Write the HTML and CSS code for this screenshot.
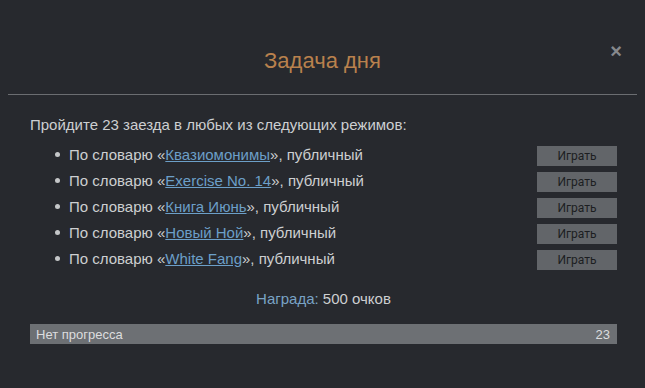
FILE: index.html
```html
<!DOCTYPE html>
<html lang="ru">
<head>
  <meta charset="UTF-8" />
  <meta name="viewport" content="width=device-width, initial-scale=1.0" />
  <title>Задача дня</title>
  <link rel="stylesheet" href="styles.css">
</head>
<body>
  <div class="modal">
    <header class="modal-header">
      <h2>Задача дня</h2>
      <span class="close">&times;</span>
    </header>

    <div class="modal-body">
      <p class="intro">Пройдите 23 заезда в любых из следующих режимов:</p>
      <ul class="modes">
        <li><span class="mode-text">По словарю «<a href="#">Квазиомонимы</a>», публичный</span><button>Играть</button></li>
        <li><span class="mode-text">По словарю «<a href="#">Exercise No. 14</a>», публичный</span><button>Играть</button></li>
        <li><span class="mode-text">По словарю «<a href="#">Книга Июнь</a>», публичный</span><button>Играть</button></li>
        <li><span class="mode-text">По словарю «<a href="#">Новый Ной</a>», публичный</span><button>Играть</button></li>
        <li><span class="mode-text">По словарю «<a href="#">White Fang</a>», публичный</span><button>Играть</button></li>
      </ul>
      <p class="reward"><span class="reward-label">Награда:</span> 500 очков</p>
      <div class="progress">
        <span>Нет прогресса</span>
        <span>23</span>
      </div>
    </div>
  </div>
</body>
</html>
```

FILE: styles.css
```css
body {
  font-family: 'Liberation Sans', Arial, sans-serif;
  margin: 0;
  padding: 0;
  background: #27292e;
  color: #cdcfd1;
}

.modal {
  margin: 0 8px;
}

.modal-header {
  position: relative;
  padding: 48px 0 20px;
  border-bottom: 1px solid #6b6d71;
  text-align: center;
}

.modal-header h2 {
  margin: 0;
  font-size: 22px;
  line-height: 26px;
  font-weight: normal;
  color: #b9814d;
}

.close {
  position: absolute;
  right: 15px;
  top: 41px;
  font-size: 20px;
  font-weight: bold;
  line-height: 20px;
  color: #86888c;
  cursor: pointer;
}

.modal-body {
  padding: 0 20px 0 22px;
}

.intro {
  margin: 20px 0 8px;
  font-size: 15px;
  line-height: 20px;
}

.modes {
  list-style: none;
  margin: 0;
  padding: 0;
}

.modes li {
  display: flex;
  align-items: center;
  height: 26px;
  font-size: 15px;
}

.modes li::before {
  content: '';
  width: 5px;
  height: 5px;
  border-radius: 50%;
  background: #c4c6c8;
  margin: 0 9px 3px 25px;
}

.mode-text {
  flex: 1;
  margin-bottom: 3px;
}

.modes a {
  color: #6c9fc8;
}

.modes button {
  width: 80px;
  height: 20px;
  padding: 0;
  border: none;
  background: #626569;
  color: #1c1e21;
  font-family: Roboto, sans-serif;
  font-size: 12px;
  cursor: pointer;
}

.reward {
  margin: 16px 0 15px;
  text-align: center;
  font-size: 15px;
  line-height: 20px;
}

.reward-label {
  color: #79a3c5;
}

.progress {
  display: flex;
  justify-content: space-between;
  align-items: center;
  height: 20px;
  padding: 0 7px 0 6px;
  background: #6d7074;
  color: #dcdddf;
  font-size: 13px;
}
```
